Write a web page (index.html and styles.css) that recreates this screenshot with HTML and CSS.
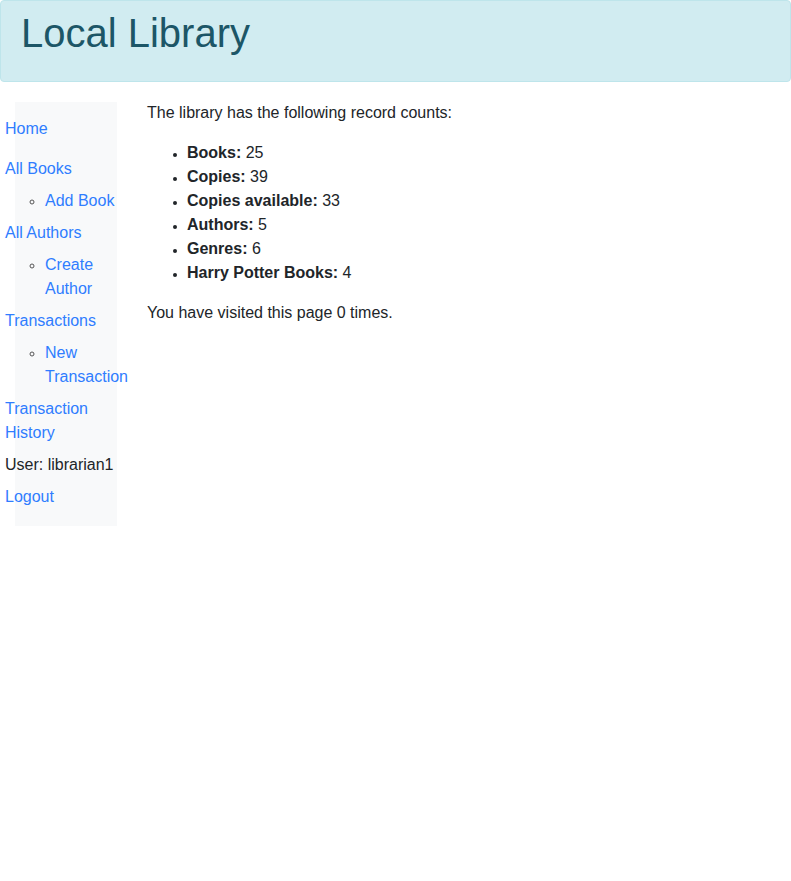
FILE: index.html
```html
<!DOCTYPE html>
<html>
<head>
<meta charset="utf-8">
<title>Local Library</title>
<link rel="stylesheet" href="styles.css">
</head>
<body>
<div class="header">
  <h1 class="title">Local Library</h1>
</div>
<div class="row">
  <div class="sidebar">
    <ul class="nav">
      <li class="home"><a href="#">Home</a></li>
      <li><a href="#">All Books</a>
        <ul class="sub"><li><a href="#">Add Book</a></li></ul>
      </li>
      <li><a href="#">All Authors</a>
        <ul class="sub"><li><a href="#">Create Author</a></li></ul>
      </li>
      <li><a href="#">Transactions</a>
        <ul class="sub"><li><a href="#">New Transaction</a></li></ul>
      </li>
      <li><a href="#">Transaction History</a></li>
      <li>User: librarian1</li>
      <li><a href="#">Logout</a></li>
    </ul>
  </div>
  <div class="content">
    <p>The library has the following record counts:</p>
    <ul class="counts">
      <li><strong>Books:</strong> 25</li>
      <li><strong>Copies:</strong> 39</li>
      <li><strong>Copies available:</strong> 33</li>
      <li><strong>Authors:</strong> 5</li>
      <li><strong>Genres:</strong> 6</li>
      <li><strong>Harry Potter Books:</strong> 4</li>
    </ul>
    <p>You have visited this page 0 times.</p>
  </div>
</div>
</body>
</html>
```
FILE: styles.css
```css
* { box-sizing: border-box; }
html, body { margin: 0; padding: 0; }
body {
  font-family: "Liberation Sans", Arial, sans-serif;
  font-size: 16px;
  line-height: 24px;
  color: #212529;
  background: #fff;
}
a { color: #2f7dff; text-decoration: none; }
.header {
  background: #d1ecf1;
  border: 1px solid #bee5eb;
  border-radius: 4px;
  padding: 8px 20px;
  height: 82px;
}
.title {
  margin: 0;
  font-size: 40px;
  line-height: 48px;
  font-weight: 500;
  color: #1c5667;
}
.row {
  display: flex;
  align-items: flex-start;
}
.sidebar {
  width: 132px;
  flex: none;
  padding: 0 15px;
  margin-top: 20px;
}
.nav {
  list-style: none;
  margin: 0;
  padding: 15px 0 9px;
  background: #f8f9fa;
}
.nav > li {
  margin-left: -10px;
  margin-bottom: 8px;
}
.nav > li.home { margin-bottom: 16px; }
.sub {
  list-style: circle;
  margin: 8px 0 0;
  padding-left: 40px;
  width: 123px;
}
.sub li::marker { color: #555; font-size: 13px; }
.content {
  flex: 1;
  padding: 0 15px;
  margin-top: 19px;
}
.content p { margin: 0 0 16px; }
.counts {
  margin: 0 0 16px;
  padding-left: 40px;
}
.counts li::marker { font-size: 12px; }
```
